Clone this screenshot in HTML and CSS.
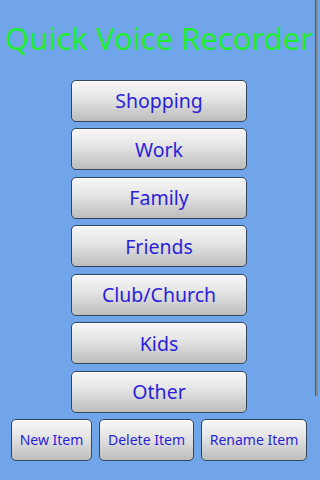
FILE: index.html
```html
<!DOCTYPE html>
<html>
<head>
<meta charset="utf-8">
<link rel="stylesheet" href="styles.css">
</head>
<body>
<div class="screen">
  <h1 class="title">Quick Voice Recorder</h1>
  <div class="list">
    <button class="btn big">Shopping</button>
    <button class="btn big">Work</button>
    <button class="btn big">Family</button>
    <button class="btn big">Friends</button>
    <button class="btn big">Club/Church</button>
    <button class="btn big">Kids</button>
    <button class="btn big">Other</button>
  </div>
  <div class="actions">
    <button class="btn small w-new">New Item</button>
    <button class="btn small w-del">Delete Item</button>
    <button class="btn small w-ren">Rename Item</button>
  </div>
  <div class="scrollbar"></div>
</div>
</body>
</html>
```
FILE: styles.css
```css
html, body {
  margin: 0;
  padding: 0;
}
body {
  background: #70a5ea;
  font-family: "Noto Sans", "Open Sans", sans-serif;
}
.screen {
  position: relative;
  width: 320px;
  height: 480px;
  overflow: hidden;
  background: #70a5ea;
}
.title {
  margin: 0;
  padding-top: 17px;
  width: 318px;
  text-align: center;
  font-weight: normal;
  font-size: 31px;
  line-height: 42px;
  height: 62.5px;
  color: #1fec30;
  white-space: nowrap;
}
.list {
  width: 318px;
  display: flex;
  flex-direction: column;
  align-items: center;
  gap: 6.5px;
}
.btn {
  box-sizing: border-box;
  margin: 0;
  padding: 0;
  border: 1px solid #34465c;
  border-radius: 5px;
  background: linear-gradient(to bottom, #f7f7f7 0%, #e6e6e6 40%, #bdbdbd 100%);
  color: #2a1fd8;
  font-family: "Noto Sans", "Open Sans", sans-serif;
  box-shadow: inset 0 1px 0 #ffffff;
}
.big {
  width: 176px;
  height: 42px;
  font-size: 19.5px;
}
.actions {
  margin-top: 6.5px;
  padding-left: 11px;
  display: flex;
  gap: 7px;
}
.small {
  height: 41.5px;
  font-size: 14px;
}
.w-new { width: 81px; }
.w-del { width: 95px; }
.w-ren { width: 106px; }
.scrollbar {
  position: absolute;
  right: 2px;
  top: 0;
  width: 2px;
  height: 396px;
  background: #8a8a8a;
  border-left: 1px solid #5a5a5a;
}
```
